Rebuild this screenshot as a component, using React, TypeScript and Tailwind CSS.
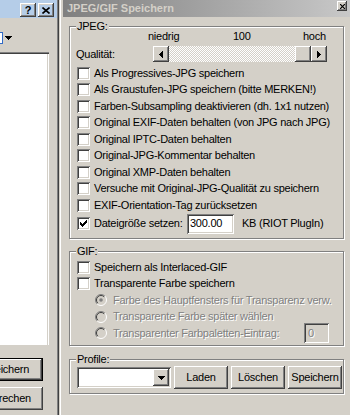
import React from "react";

// win2000 3d borders
const raised =
  "shadow-[inset_-1px_-1px_#404040,inset_1px_1px_#fff,inset_-2px_-2px_#808080,inset_2px_2px_#d4d0c8]";
const sunken =
  "shadow-[inset_1px_1px_#808080,inset_-1px_-1px_#fff,inset_2px_2px_#404040,inset_-2px_-2px_#d4d0c8]";
const disabledText = "text-[#808080] [text-shadow:1px_1px_#fff]";

const CheckBox = ({ checked }: { checked?: boolean }) => (
  <span className={`w-[13px] h-[13px] shrink-0 bg-white flex items-center justify-center ${sunken}`}>
    {checked && (
      <svg width="7" height="7" viewBox="0 0 7 7" shapeRendering="crispEdges">
        <path d="M0 2h1v3h-1zM1 3h1v3h-1zM2 4h1v3h-1zM3 3h1v3h-1zM4 2h1v3h-1zM5 1h1v3h-1zM6 0h1v3h-1z" fill="#000" />
      </svg>
    )}
  </span>
);

const Radio = ({ dot }: { dot?: boolean }) => (
  <svg width="12" height="12" viewBox="0 0 12 12" className="shrink-0">
    <circle cx="6" cy="6" r="5.5" fill="#d4d0c8" />
    <path d="M9.9 2.1 A5.5 5.5 0 0 0 2.1 9.9" stroke="#808080" fill="none" />
    <path d="M2.1 9.9 A5.5 5.5 0 0 0 9.9 2.1" stroke="#fff" fill="none" />
    <path d="M9.2 2.8 A4.5 4.5 0 0 0 2.8 9.2" stroke="#404040" fill="none" />
    {dot && <circle cx="6" cy="6" r="1.8" fill="#808080" />}
  </svg>
);

const Group = ({
  label,
  className,
  children,
}: {
  label: string;
  className: string;
  children: React.ReactNode;
}) => (
  <div className={`relative shrink-0 border border-[#808080] shadow-[inset_1px_1px_#fff,1px_1px_#fff] ${className}`}>
    <span className="absolute -top-[7px] left-[6px] bg-[#d4d0c8] px-[1px] leading-[13px]">{label}</span>
    {children}
  </div>
);

const Row = ({ label, checked }: { label: string; checked?: boolean }) => (
  <div className="flex h-[16.5px] items-center gap-[4px] pl-[7px] whitespace-nowrap">
    <CheckBox checked={checked} />
    <span>{label}</span>
  </div>
);

const Arrow = ({ dir }: { dir: "left" | "right" | "down" }) => {
  if (dir === "down")
    return (
      <svg width="7" height="4" viewBox="0 0 7 4" shapeRendering="crispEdges">
        <path d="M0 0h7v1h-1v1h-1v1h-1v1h-1v-1h-1v-1h-1v-1h-1z" fill="#000" />
      </svg>
    );
  return (
    <svg width="4" height="7" viewBox="0 0 4 7" shapeRendering="crispEdges" className={dir === "right" ? "rotate-180" : ""}>
      <path d="M3 0h1v7h-1v-1h-1v-1h-1v-1h-1v-1h1v-1h1v-1h1z" fill="#000" />
    </svg>
  );
};

const PushButton = ({ label, className = "" }: { label: string; className?: string }) => (
  <div className={`h-[23px] shrink-0 flex items-center justify-center bg-[#d4d0c8] ${raised} ${className}`}>
    {label}
  </div>
);

const LeftWindow = () => (
  <div className="w-[57px] shrink-0 flex flex-col">
    <div className="h-[18px] bg-[#b5cde8] flex items-end justify-end gap-[2px] pr-[3px] pb-[1px]">
      <span className={`w-[16px] h-[14px] flex items-center justify-center font-bold text-[11px] ${raised}`}>?</span>
      <span className={`w-[16px] h-[14px] flex items-center justify-center ${raised}`}>
        <svg width="8" height="7" viewBox="0 0 8 7">
          <path d="M0.5 0.5L7.5 6.5M7.5 0.5L0.5 6.5" stroke="#000" strokeWidth="1.6" />
        </svg>
      </span>
    </div>
    <div className="mt-[14px] h-[12px] flex items-center">
      <span className="w-[3px] h-[12px] bg-white border border-l-0 border-[#316ac5]" />
      <span className="ml-[2px]">
        <Arrow dir="down" />
      </span>
    </div>
    <div className="mt-[8px] w-[49px] h-[293px] bg-white shadow-[inset_0_1px_#808080,inset_0_2px_#404040,inset_-1px_0_#fff,inset_-2px_0_#d4d0c8]" />
    <div className="mt-[13px] -ml-[32px] w-[75px] h-[23px] border border-black shrink-0">
      <PushButton label="Speichern" className="w-full h-full" />
    </div>
    <PushButton label="Abbrechen" className="mt-[6px] -ml-[32px] w-[75px]" />
  </div>
);

const Dialog = () => (
  <div className="flex-1 min-w-0 flex flex-col shadow-[inset_1px_0_#d4d0c8,inset_2px_0_#fff]">
    <div className="ml-[4px] h-[17px] flex items-center bg-linear-to-r from-[#808080] to-[#c8c8c8]">
      <span className="pl-[4px] font-bold text-[#d4d0c8] tracking-normal whitespace-nowrap">JPEG/GIF Speichern</span>
      <span className={`ml-auto mr-[3px] self-start mt-[1px] w-[10px] h-[10px] flex items-center justify-center bg-[#d4d0c8] ${raised}`}>
        <svg width="5" height="5" viewBox="0 0 5 5">
          <path d="M0 0L5 5M5 0L0 5" stroke="#000" strokeWidth="1.2" />
        </svg>
      </span>
    </div>

    <Group label="JPEG:" className="ml-[10px] mt-[9px] w-[275px] h-[213px]">
      <div className="mt-[3px] h-[13px] flex pl-[78px]">
        <span className="w-[85px]">niedrig</span>
        <span className="w-[70px]">100</span>
        <span>hoch</span>
      </div>
      <div className="mt-[3px] h-[16px] flex items-center">
        <span className="pl-[6px] w-[83px]">Qualität:</span>
        <div className="flex w-[174px] h-[16px]">
          <span className={`w-[16px] h-[16px] flex items-center justify-center bg-[#d4d0c8] ${raised}`}>
            <Arrow dir="left" />
          </span>
          <span className="flex-1 bg-[repeating-conic-gradient(#fff_0_25%,#d4d0c8_0_50%)] bg-[length:2px_2px]" />
          <span className={`w-[16px] h-[16px] bg-[#d4d0c8] ${raised}`} />
          <span className={`w-[16px] h-[16px] flex items-center justify-center bg-[#d4d0c8] ${raised}`}>
            <Arrow dir="right" />
          </span>
        </div>
      </div>
      <div className="mt-[3px] flex flex-col">
        <Row label="Als Progressives-JPG speichern" />
        <Row label="Als Graustufen-JPG speichern (bitte MERKEN!)" />
        <Row label="Farben-Subsampling deaktivieren (dh. 1x1 nutzen)" />
        <Row label="Original EXIF-Daten behalten (von JPG nach JPG)" />
        <Row label="Original IPTC-Daten behalten" />
        <Row label="Original-JPG-Kommentar behalten" />
        <Row label="Original XMP-Daten behalten" />
        <Row label="Versuche mit Original-JPG-Qualität zu speichern" />
        <Row label="EXIF-Orientation-Tag zurücksetzen" />
        <div className="flex h-[20px] items-center pl-[7px] whitespace-nowrap">
          <CheckBox checked />
          <span className="ml-[4px] w-[93px]">Dateigröße setzen:</span>
          <span className={`w-[47px] h-[20px] bg-white pl-[3px] flex items-center ${sunken}`}>300.00</span>
          <span className="ml-[8px]">KB (RIOT PlugIn)</span>
        </div>
      </div>
    </Group>

    <Group label="GIF:" className="ml-[10px] mt-[12px] w-[275px] h-[95px]">
      <div className="pt-[7px] flex flex-col">
        <Row label="Speichern als Interlaced-GIF" />
        <Row label="Transparente Farbe speichern" />
        <div className={`flex h-[16.5px] items-center gap-[6px] pl-[25px] whitespace-nowrap ${disabledText}`}>
          <Radio dot />
          <span>Farbe des Hauptfensters für Transparenz verw.</span>
        </div>
        <div className={`flex h-[16.5px] items-center gap-[6px] pl-[25px] whitespace-nowrap ${disabledText}`}>
          <Radio />
          <span>Transparente Farbe später wählen</span>
        </div>
        <div className={`flex h-[16.5px] items-center gap-[6px] pl-[25px] whitespace-nowrap ${disabledText}`}>
          <Radio />
          <span>Transparenter Farbpaletten-Eintrag:</span>
          <span className={`ml-auto mr-[14px] w-[25px] h-[20px] shrink-0 pl-[4px] flex items-center bg-[#d4d0c8] ${sunken}`}>0</span>
        </div>
      </div>
    </Group>

    <Group label="Profile:" className="ml-[10px] mt-[13px] w-[275px] h-[35px]">
      <div className="mt-[6px] h-[23px] flex items-center pl-[7px]">
        <div className={`w-[94px] h-[21px] bg-white flex items-center justify-end pr-[2px] ${sunken}`}>
          <span className={`w-[16px] h-[17px] flex items-center justify-center bg-[#d4d0c8] ${raised}`}>
            <Arrow dir="down" />
          </span>
        </div>
        <div className="ml-[3px] flex gap-[3px]">
          <PushButton label="Laden" className="w-[54px]" />
          <PushButton label="Löschen" className="w-[54px]" />
          <PushButton label="Speichern" className="w-[54px]" />
        </div>
      </div>
    </Group>
  </div>
);

export default function App() {
  return (
    <div className="w-[350px] h-[415px] overflow-hidden flex bg-[#d4d0c8] text-black text-[11px] leading-[13px] tracking-[-0.25px] font-['Liberation_Sans',Arial,sans-serif]">
      <LeftWindow />
      <div className="w-px shrink-0 bg-[#808080]" />
      <div className="w-px shrink-0 bg-[#404040]" />
      <Dialog />
    </div>
  );
}
